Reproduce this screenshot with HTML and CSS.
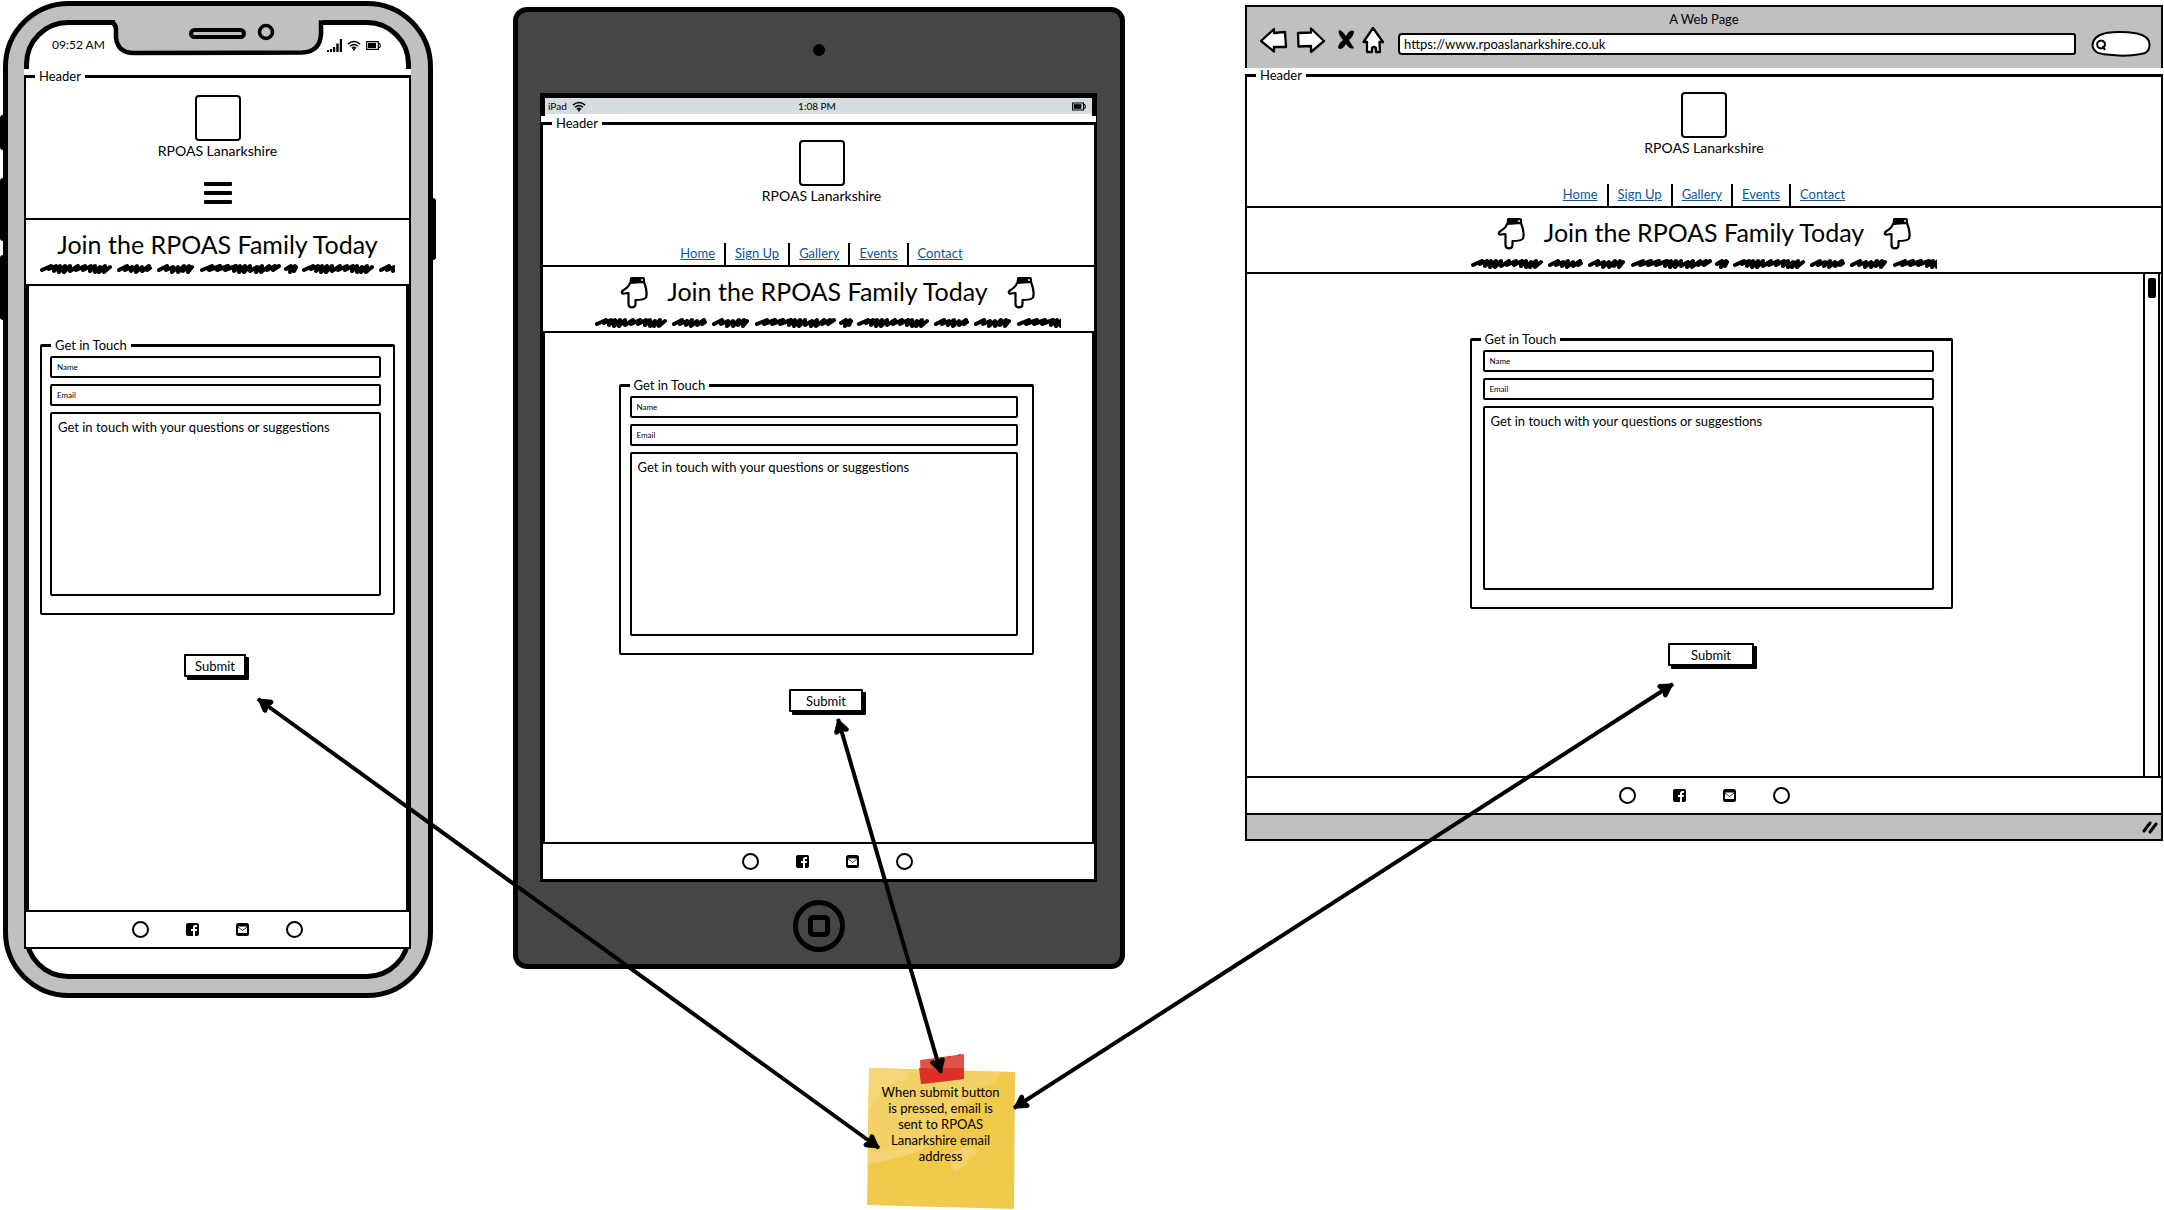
FILE: index.html
```html
<!DOCTYPE html>
<html lang="en">
<head>
<meta charset="utf-8">
<meta name="viewport" content="width=device-width, initial-scale=1">
<title>RPOAS Lanarkshire – Join page wireframes</title>
<link rel="stylesheet" href="styles.css">
</head>
<body>
<svg class="defs" aria-hidden="true">
  <defs>
    <pattern id="scribble" width="262" height="12" patternUnits="userSpaceOnUse">
      <g fill="none" stroke="#000" stroke-width="4" stroke-linecap="round" stroke-linejoin="round">
        <path d="M2 8l9-4-2 3 7-3-2 5 6-5-1 6 6-6-1 6 6-6 0 5 8-5-2 4 9-4-2 4 8-4-1 5 5-5 0 6 5-5-1 5 6-6-1 6 6-5"/>
        <path d="M79 8l8-4-2 4 7-3-1 4 6-5-1 6 6-5 0 4 7-5-2 4 3-2"/>
        <path d="M119 8l8-4-1 4 7-3-1 5 6-5 0 5 6-6-1 5 6-5-1 6 4-5"/>
        <path d="M162 8l10-4-3 4 11-4-3 4 11-4-3 4 11-4-2 5 6-5-1 6 6-6-1 6 6-6 0 5 7-4-1 5 6-6-1 6 8-6-2 4 8-4-2 4 6-4"/>
        <path d="M246 7l5-3-1 6 5-6-1 5 2-4"/>
      </g>
    </pattern>
    <symbol id="hand" viewBox="0 0 28 33">
      <path d="M10 7C9 11 5 13 3 14.500C1 16 1.500 18 4 17.500L8.500 17V28C8.500 32.500 15.500 32.500 15.500 28V24C20 24 25 23 26 21.500C27.500 17 26 11 24 6Z" fill="#fff" stroke="#000" stroke-width="2.200" stroke-linejoin="round"/>
      <path d="M10 2Q10 1 12 1H23Q25 1 25 3V7H9.500Z"/>
      <circle cx="22" cy="4" r="1" fill="#fff"/>
    </symbol>
    <symbol id="facebook" viewBox="0 0 13 13">
      <rect width="13" height="13" rx="2"/>
      <path d="M7 13V8H5V6h2V4.500Q7 2 9.500 2H11v2H9.800Q9 4 9 4.800V6h2l-.3 2H9v5z" fill="#fff"/>
    </symbol>
    <symbol id="mail" viewBox="0 0 13 13">
      <rect width="13" height="13" rx="2.500"/>
      <path d="M2 3.500h9v6.500H2z" fill="#fff"/>
      <path d="M2 4l4.500 3.500L11 4" fill="none" stroke="#000" stroke-width=".8"/>
    </symbol>
    <symbol id="wifi" viewBox="0 0 15 11">
      <g fill="none" stroke="#000" stroke-width="1.700">
        <path d="M1 4Q7.500-1.500 14 4M3.200 6.300Q7.500 2.600 11.800 6.300M5.300 8.500Q7.500 6.600 9.700 8.500"/>
      </g>
      <circle cx="7.500" cy="9.700" r="1.200"/>
    </symbol>
    <symbol id="battery" viewBox="0 0 15 9">
      <path d="M.7.7h11.600v7.600H.7zM13 2.200q1.300.4 1.300 2.300T13 6.800" fill="none" stroke="#000" stroke-width="1.200"/>
      <path d="M2 2h8v5H2z"/>
    </symbol>
    <marker id="tip" viewBox="0 0 16 16" refX="15" refY="8" markerWidth="16" markerHeight="16" markerUnits="userSpaceOnUse" orient="auto-start-reverse">
      <path d="M15 8L3 15Q0 15 1 12L3 8 1 4Q0 1 3 1Z" stroke="#000" stroke-linejoin="round"/>
    </marker>
  </defs>
</svg>

<main class="board">

  <section class="phone" aria-label="Phone">
    <i class="key key-mute"></i><i class="key key-up"></i><i class="key key-down"></i><i class="key key-power"></i>
    <div class="phone-screen">
      <svg class="notch" width="216" height="36" viewBox="0 0 216 36" aria-hidden="true">
        <path d="M5 0H213V6H211V14Q210 32 192 32.500L24 33Q8 33 6 18V6H5Z" fill="#c0c0c0"/>
        <path d="M0 2.500Q6 2.500 6 10V18Q8 33 24 33L192 32.500Q210 32 211 14V2.500H216" fill="none" stroke="#000" stroke-width="4.500"/>
        <rect x="81" y="10" width="53" height="7" rx="3.500" fill="none" stroke="#000" stroke-width="4"/>
        <circle cx="156" cy="12" r="6.500" fill="none" stroke="#000" stroke-width="3.500"/>
      </svg>
      <div class="phone-status">
        <span>09:52 AM</span>
        <span class="phone-signals">
          <svg width="15" height="13" viewBox="0 0 15 13" aria-hidden="true"><path d="M0 11h2v2H0zM3 10h2v3H3zM6 8h2.200v5H6zM9.300 4.500h2.400v8.500H9.300zM12.800 0H15v13h-2.200z"/></svg>
          <svg width="14" height="11" aria-hidden="true"><use href="#wifi"/></svg>
          <svg width="15" height="9" aria-hidden="true"><use href="#battery"/></svg>
        </span>
      </div>
      <div class="site-header">
        <fieldset class="group">
          <legend>Header</legend>
          <div class="header-content">
            <div class="logo"></div>
            <div class="site-name">RPOAS Lanarkshire</div>
            <button class="menu" type="button" aria-label="Menu"><i></i><i></i><i></i></button>
          </div>
        </fieldset>
      </div>
      <div class="banner">
        <div class="banner-title"><h1>Join the RPOAS Family Today</h1></div>
        <svg class="scribble" aria-hidden="true"><rect width="100%" height="12" fill="url(#scribble)"/></svg>
      </div>
      <form class="panel">
        <fieldset class="contact">
          <legend>Get in Touch</legend>
          <div class="fields">
            <input type="text" placeholder="Name" aria-label="Name">
            <input type="email" placeholder="Email" aria-label="Email">
            <textarea placeholder="Get in touch with your questions or suggestions" aria-label="Message"></textarea>
          </div>
        </fieldset>
        <button class="submit" type="button">Submit</button>
      </form>
      <footer class="social">
        <i class="dot"></i>
        <svg width="13" height="13" role="img" aria-label="Facebook"><use href="#facebook"/></svg>
        <svg width="13" height="13" role="img" aria-label="Email"><use href="#mail"/></svg>
        <i class="dot"></i>
      </footer>
    </div>
  </section>

  <section class="tablet" aria-label="Tablet">
    <div class="bezel-top"><i class="camera"></i></div>
    <div class="tablet-screen">
      <div class="tablet-status">
        <span class="carrier">iPad <svg width="14" height="11" aria-hidden="true"><use href="#wifi"/></svg></span>
        <span>1:08 PM</span>
        <span class="charge"><svg width="14" height="9" aria-hidden="true"><use href="#battery"/></svg></span>
      </div>
      <div class="site-header">
        <fieldset class="group">
          <legend>Header</legend>
          <div class="header-content">
            <div class="logo"></div>
            <div class="site-name">RPOAS Lanarkshire</div>
            <nav class="links"><a href="#">Home</a><a href="#">Sign Up</a><a href="#">Gallery</a><a href="#">Events</a><a href="#">Contact</a></nav>
          </div>
        </fieldset>
      </div>
      <div class="banner">
        <div class="banner-title">
          <svg width="28" height="33" aria-hidden="true"><use href="#hand"/></svg>
          <h1>Join the RPOAS Family Today</h1>
          <svg width="28" height="33" aria-hidden="true"><use href="#hand"/></svg>
        </div>
        <svg class="scribble" aria-hidden="true"><rect width="100%" height="12" fill="url(#scribble)"/></svg>
      </div>
      <form class="panel">
        <fieldset class="contact">
          <legend>Get in Touch</legend>
          <div class="fields">
            <input type="text" placeholder="Name" aria-label="Name">
            <input type="email" placeholder="Email" aria-label="Email">
            <textarea placeholder="Get in touch with your questions or suggestions" aria-label="Message"></textarea>
          </div>
        </fieldset>
        <button class="submit" type="button">Submit</button>
      </form>
      <footer class="social">
        <i class="dot"></i>
        <svg width="13" height="13" role="img" aria-label="Facebook"><use href="#facebook"/></svg>
        <svg width="13" height="13" role="img" aria-label="Email"><use href="#mail"/></svg>
        <i class="dot"></i>
      </footer>
    </div>
    <div class="bezel-bottom"><button class="home" type="button" aria-label="Home button"><i></i></button></div>
  </section>

  <section class="browser" aria-label="Browser window">
    <div class="chrome">
      <div class="page-title">A Web Page</div>
      <div class="toolbar">
        <svg class="tools" width="130" height="30" viewBox="0 0 130 30" aria-hidden="true">
          <g fill="#fff" stroke="#000" stroke-width="2.300" stroke-linejoin="round">
            <path d="M1 14L14 2V6L25 5 26 20 14 20V24.500Z"/>
            <path d="M64 14L51 1.500V5.500L38 6 38.500 19.500 51 19V25Z"/>
            <path d="M113 1L123 15H119.500L120 25H116V21Q113.500 19 112 21V25H107L107 15H103.500Z"/>
          </g>
          <path d="M79 3Q82 3 86 9 90 2 94 4 94 9 89 13 92 18 94 21 90 23 86 17 82 24 78 21 78 17 83 13 77 6 79 3Z"/>
        </svg>
        <input class="url" type="text" value="https://www.rpoaslanarkshire.co.uk" aria-label="Address">
        <svg class="search" width="60" height="26" viewBox="0 0 60 26" aria-hidden="true">
          <path d="M15 2Q30 0 46 2.500 58 5 58.500 13 59 22 50 23 34 26 16 23.500 2 23 1.500 14 2 5 15 2Z" fill="#fff" stroke="#000" stroke-width="2"/>
          <path d="M10 9.500a4 4 0 1 0 .1 0M11.500 15L14 19" fill="none" stroke="#000" stroke-width="2"/>
        </svg>
      </div>
    </div>
    <div class="site-header">
      <fieldset class="group">
        <legend>Header</legend>
        <div class="header-content">
          <div class="logo"></div>
          <div class="site-name">RPOAS Lanarkshire</div>
          <nav class="links"><a href="#">Home</a><a href="#">Sign Up</a><a href="#">Gallery</a><a href="#">Events</a><a href="#">Contact</a></nav>
        </div>
      </fieldset>
    </div>
    <div class="banner">
      <div class="banner-title">
        <svg width="28" height="33" aria-hidden="true"><use href="#hand"/></svg>
        <h1>Join the RPOAS Family Today</h1>
        <svg width="28" height="33" aria-hidden="true"><use href="#hand"/></svg>
      </div>
      <svg class="scribble" aria-hidden="true"><rect width="100%" height="12" fill="url(#scribble)"/></svg>
    </div>
    <div class="viewport">
      <form class="panel">
        <fieldset class="contact">
          <legend>Get in Touch</legend>
          <div class="fields">
            <input type="text" placeholder="Name" aria-label="Name">
            <input type="email" placeholder="Email" aria-label="Email">
            <textarea placeholder="Get in touch with your questions or suggestions" aria-label="Message"></textarea>
          </div>
        </fieldset>
        <button class="submit" type="button">Submit</button>
      </form>
      <div class="scrollbar"><i></i></div>
    </div>
    <footer class="social">
      <i class="dot"></i>
      <svg width="13" height="13" role="img" aria-label="Facebook"><use href="#facebook"/></svg>
      <svg width="13" height="13" role="img" aria-label="Email"><use href="#mail"/></svg>
      <i class="dot"></i>
    </footer>
    <div class="window-foot">
      <svg width="16" height="14" viewBox="0 0 16 14" aria-hidden="true"><path d="M2 11L8 3M8 12L14 4" stroke="#000" stroke-width="3" stroke-linecap="round"/></svg>
    </div>
  </section>

  <aside class="note">
    <svg class="paper" viewBox="0 0 150 158" preserveAspectRatio="none" aria-hidden="true">
      <path d="M3 15L149 19 148 157 1 153Z" fill="#f2ca4b"/>
      <path d="M3 15L135 19Q128 35 112 34L86 72Q68 84 62 94L2 108Z" fill="#f3d166"/>
      <path d="M3 15L38 17Q44 24 42 29 26 26 12 42L3 58Z" fill="#f5d778"/>
      <path d="M2 102Q20 96 60 94 52 102 2 112Z" fill="#f4d473"/>
      <path d="M94 96Q104 92 113 98 110 104 104 106 96 120 88 118 84 112 82 104Z" fill="#f4d169"/>
    </svg>
    <p>When submit button is pressed, email is sent to RPOAS Lanarkshire email address</p>
    <svg class="tape" width="46" height="32" viewBox="0 0 46 32" aria-hidden="true">
      <path d="M1 7L45 1V26L2 31Z" fill="#e05448"/>
      <path d="M0 15H45V26L2 31Z" fill="#de3027"/>
      <path d="M28 4l4-1-1 3zM38 2l4-1-1 3z" fill="#de3027"/>
    </svg>
  </aside>

  <svg class="arrows" viewBox="0 0 2164 1210" aria-hidden="true">
    <g stroke="#000" stroke-width="4">
      <path d="M258 699L879 1148" marker-start="url(#tip)" marker-end="url(#tip)"/>
      <path d="M838 719L941 1073" marker-start="url(#tip)" marker-end="url(#tip)"/>
      <path d="M1673 684L1014 1108" marker-start="url(#tip)" marker-end="url(#tip)"/>
    </g>
  </svg>
</main>
</body>
</html>
```

FILE: styles.css
```css
:root {
  --ink: #000;
  --metal: #c0c0c0;
  --slate: #464646;
  --link: #0b5599;
}

* { box-sizing: border-box; }

body {
  margin: 0;
  background: #fff;
  color: var(--ink);
  font: 13px/16px Lato, "Open Sans", sans-serif;
}

button, input, textarea { font: inherit; color: inherit; margin: 0; }
h1, p { margin: 0; }
fieldset { margin: 0; min-width: 0; }
i { display: block; }
.defs { position: absolute; width: 0; height: 0; }

.board {
  position: relative;
  display: grid;
  grid-template-columns:
    minmax(0, 3fr) minmax(0, 430fr) minmax(0, 80fr)
    minmax(0, 612fr) minmax(0, 120fr) minmax(0, 919fr);
  align-items: start;
  min-height: 1210px;
}

/* Shared page sections */
.site-header { background: #fff; }
.group { padding: 0; border: 2px solid var(--ink); border-top-width: 3px; }
.group legend, .contact legend {
  margin-left: 9px;
  padding: 0 4px;
  line-height: 14px;
}
.header-content {
  display: flex;
  flex-direction: column;
  align-items: center;
  padding: 10px 0 0;
}
.logo { width: 46px; height: 46px; border: 2px solid var(--ink); border-radius: 4px; }
.site-name { margin-top: 2px; font-size: 14px; }

.menu {
  display: flex;
  flex-direction: column;
  gap: 5px;
  width: 28px;
  margin: 23px 0 14px;
  padding: 0;
  border: 0;
  background: none;
}
.menu i { height: 4px; border-radius: 1px; background: var(--ink); }

.links { display: flex; height: 22px; }
.links a { padding: 2px 9px; color: var(--link); }
.links a + a { border-left: 2px solid var(--ink); }

.banner {
  display: flex;
  flex-direction: column;
  align-items: center;
  height: 66px;
  padding-top: 9px;
  border: solid var(--ink);
  border-width: 0 2px 2px;
  background: #fff;
}
.banner-title { display: flex; align-items: flex-start; gap: 19px; height: 40px; }
.banner h1 { font-size: 25px; font-weight: 400; line-height: 30px; white-space: nowrap; }
.scribble { flex: none; width: 466px; max-width: 100%; height: 12px; }

.panel { display: flex; flex-direction: column; align-items: center; }
.contact { width: 100%; padding: 0; border: 2px solid var(--ink); border-top-width: 3px; border-radius: 2px; }
.fields { display: flex; flex-direction: column; gap: 6px; padding: 4px 14px 17px 9px; }
.fields input, .fields textarea {
  display: block;
  width: 100%;
  border: 2px solid var(--ink);
  border-radius: 2px;
  background: #fff;
  outline: 0;
}
.fields input { height: 22px; padding: 0 5px; font-size: 8px; }
.fields textarea { height: 184px; padding: 5px 6px; resize: none; }
::placeholder { color: var(--ink); opacity: 1; }
.submit {
  height: 23px;
  margin-top: 34px;
  padding: 0;
  border: 2px solid var(--ink);
  border-radius: 1px;
  background: #fff;
  box-shadow: 3px 3px 0 var(--ink);
}

.social {
  display: flex;
  justify-content: center;
  align-items: center;
  gap: 37px;
  height: 39px;
  border: 2px solid var(--ink);
  background: #fff;
}
.dot { width: 17px; height: 17px; border: 2px solid var(--ink); border-radius: 50%; }

/* Phone */
.phone {
  position: relative;
  grid-column: 2;
  margin-top: 1px;
  padding: 14px 17px 14px 16px;
  border: 5px solid var(--ink);
  border-radius: 66px;
  background: var(--metal);
}
.phone-screen {
  position: relative;
  padding-bottom: 25px;
  border: 5px solid var(--ink);
  border-radius: 44px;
  background: #fff;
}
.notch { position: absolute; top: -5px; left: 50%; margin-left: -108px; }
.phone-status {
  display: flex;
  justify-content: space-between;
  align-items: center;
  height: 44px;
  padding: 0 25px 4px 23px;
  font-size: 12px;
}
.phone-signals { display: flex; align-items: center; gap: 5px; }
.phone .site-header, .phone .banner, .phone .social { margin-left: -5px; margin-right: -5px; }
.phone .header-content { padding-top: 12px; }
.phone .banner-title { height: 33px; }
.phone .scribble { width: 355px; }
.phone .panel { height: 624px; padding: 52px 11px 0; }
.phone .fields { padding-left: 8px; padding-right: 12px; }
.phone .submit { width: 62px; margin: 39px 5px 0 0; }
.key { position: absolute; left: -8px; width: 6px; border-radius: 3px; background: var(--ink); }
.key-mute { top: 109px; height: 35px; }
.key-up { top: 172px; height: 63px; }
.key-down { top: 249px; height: 65px; }
.key-power { top: 192px; left: auto; right: -8px; height: 62px; }

/* Tablet */
.tablet {
  grid-column: 4;
  margin-top: 7px;
  padding: 0 23px 0 22px;
  border: 5px solid var(--ink);
  border-radius: 14px;
  background: var(--slate);
}
.bezel-top { display: flex; justify-content: center; height: 81px; padding-top: 32px; }
.camera { width: 12px; height: 12px; border-radius: 50%; background: var(--ink); }
.tablet-screen { border: 5px solid var(--ink); background: #fff; }
.tablet-status {
  display: grid;
  grid-template-columns: 1fr auto 1fr;
  align-items: center;
  height: 16px;
  margin-bottom: 2px;
  padding: 0 6px 0 3px;
  background: #d6dde0;
  font-size: 10px;
}
.carrier { display: flex; align-items: center; gap: 5px; }
.charge { display: flex; justify-content: flex-end; }
.tablet .site-header, .tablet .banner, .tablet .social { margin-left: -4px; margin-right: -4px; }
.tablet .header-content { padding-left: 6px; }
.tablet .links { margin-top: 39px; }
.tablet .banner, .tablet .social { padding-left: 18px; }
.tablet .panel { height: 509px; padding: 45px 0 0 15px; }
.tablet .contact { width: 415px; max-width: 100%; }
.tablet .submit { width: 74px; }
.tablet .social { margin-bottom: -4px; }
.bezel-bottom { display: flex; justify-content: center; height: 82px; padding-top: 18px; }
.home {
  display: grid;
  place-items: center;
  width: 52px;
  height: 52px;
  padding: 0;
  border: 5px solid var(--ink);
  border-radius: 50%;
  background: none;
}
.home i { width: 22px; height: 22px; border: 5px solid var(--ink); border-radius: 5px; }

/* Browser window */
.browser {
  grid-column: 6;
  margin: 5px 1px 0 0;
  border: 2px solid var(--ink);
  background: #fff;
}
.chrome { height: 61px; padding-top: 4px; background: var(--metal); }
.page-title { text-align: center; }
.toolbar { display: flex; align-items: center; height: 30px; padding: 0 10px 0 13px; }
.tools { flex: none; margin-right: 8px; }
.url {
  flex: 1;
  min-width: 0;
  height: 22px;
  margin: 4px 15px 0 0;
  padding: 0 4px;
  border: 2px solid var(--ink);
  border-radius: 4px 3px 3px 4px;
  background: #fff;
}
.search { flex: none; margin-top: 3px; }
.browser .site-header, .browser .banner, .browser .social { margin-left: -2px; margin-right: -2px; }
.browser .links { margin-top: 28px; }
.viewport { display: flex; height: 502px; }
.browser .panel { flex: 1; padding: 58px 0 0 32px; }
.browser .contact { width: 483px; max-width: 100%; }
.browser .fields { padding-left: 11px; padding-right: 17px; }
.browser .submit { width: 86px; }
.scrollbar { width: 17px; margin-right: 1px; padding: 4px 2px; border: solid var(--ink); border-width: 0 2px; }
.scrollbar i { width: 8px; height: 20px; margin: 0 auto; border-radius: 2px; background: var(--ink); }
.window-foot { display: flex; justify-content: flex-end; align-items: center; height: 24px; padding-right: 3px; background: var(--metal); }

/* Sticky note and connectors */
.note {
  position: absolute;
  top: 1053px;
  left: 40%;
  width: 150px;
  height: 157px;
  padding: 31px 14px 0;
  text-align: center;
}
.note p { position: relative; }
.paper { position: absolute; inset: 0; width: 100%; height: 100%; }
.tape { position: absolute; top: 0; left: 53px; }
.arrows { position: absolute; top: 0; left: 0; width: 100%; height: auto; pointer-events: none; }
```
